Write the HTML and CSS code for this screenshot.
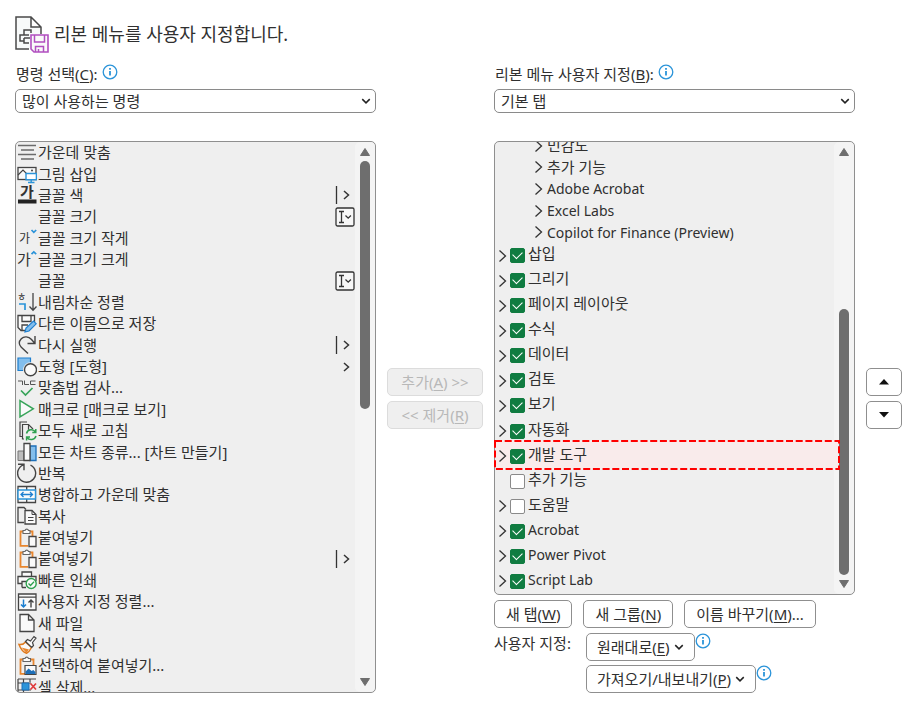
FILE: index.html
```html
<!DOCTYPE html>
<html lang="ko">
<head>
<meta charset="utf-8">
<title>리본 메뉴를 사용자 지정합니다.</title>
<link rel="stylesheet" href="styles.css">
</head>
<body>
<svg class="sprite" aria-hidden="true">
  <symbol id="info" viewBox="0 0 16 16"><circle cx="8" cy="8" r="6.8" fill="none" stroke="#2b94d9" stroke-width="1.3"/><path d="M8 7v4.6M8 4v1.8" stroke="#2b94d9" stroke-width="1.8"/></symbol>
  <symbol id="down" viewBox="0 0 8 8"><path d="M1 2.500l3 3 3-3" fill="none" stroke="#222" stroke-width="1.2"/></symbol>
  <symbol id="exp" viewBox="0 0 10 14"><path d="M1.500 1.500l6 5.500-6 5.500" fill="none" stroke="#333" stroke-width="1.3"/></symbol>
  <symbol id="up-tri" viewBox="0 0 12 10"><path d="M6 1.500L10.500 8.500H1.500z" fill="#6e6e6e" stroke="#6e6e6e" stroke-linejoin="round"/></symbol>
  <symbol id="down-tri" viewBox="0 0 12 10"><path d="M6 8.500L10.500 1.500H1.500z" fill="#6e6e6e" stroke="#6e6e6e" stroke-linejoin="round"/></symbol>
  <symbol id="split" viewBox="0 0 20 20"><path d="M1.500 1v18" stroke="#333" stroke-width="1.3"/><path d="M9 6l4.500 4L9 14" fill="none" stroke="#333" stroke-width="1.500"/></symbol>
  <symbol id="more" viewBox="0 0 20 20"><path d="M9 6l4.500 4L9 14" fill="none" stroke="#333" stroke-width="1.500"/></symbol>
  <symbol id="combo" viewBox="0 0 20 20"><rect x="1" y="1" width="18" height="18" rx="1.500" fill="#f7f7f7" stroke="#333" stroke-width="1.3"/><path d="M4 4.500h5M4 15.500h5M6.500 4.500v11M10.500 8.500l2.700 2.700 2.700-2.700" fill="none" stroke="#333" stroke-width="1.3"/></symbol>

  <symbol id="i-center" viewBox="0 0 20 20"><path d="M1 2.500h18M4 7h13M1 11.500h18M4 16h13" stroke="#6b6b6b" stroke-width="1.4"/></symbol>
  <symbol id="i-pic" viewBox="0 0 20 20"><rect x="1" y="3.500" width="18" height="12" fill="#fafafa" stroke="#444" stroke-width="1.300"/><path d="M1 11l5-5 5 5" fill="none" stroke="#444" stroke-width="1.200"/><circle cx="15" cy="6.500" r="1" fill="#444"/><path d="M9 9.500h10.400v6.300H9z" fill="#fff" stroke="#2b94d9" stroke-width="1.400"/><path d="M14.200 16v2M11 18.500h6.500" stroke="#2b94d9" stroke-width="1.400"/></symbol>
  <symbol id="i-color" viewBox="0 0 20 20"><text x="3" y="12" font-size="15" font-weight="700" class="glyph">가</text><path d="M1 14.500h18.500v4H1z" fill="#222"/></symbol>
  <symbol id="i-smaller" viewBox="0 0 20 20"><text x="2" y="14.500" font-size="12" class="glyph">가</text><path d="M14.500 2l2.300 2.300L19.200 2" fill="none" stroke="#2b94d9" stroke-width="1.700"/></symbol>
  <symbol id="i-bigger" viewBox="0 0 20 20"><text x="0" y="14.500" font-size="15" class="glyph">가</text><path d="M14.500 4.200l2.300-2.300 2.400 2.300" fill="none" stroke="#2b94d9" stroke-width="1.700"/></symbol>
  <symbol id="i-sort" viewBox="0 0 20 20"><text x="0" y="9" font-size="10" class="glyph">ㅎ</text><path d="M2 12h6v6" fill="none" stroke="#2b94d9" stroke-width="1.700"/><path d="M16 1v17M12.500 14.500L16 18.200l3.500-3.700" fill="none" stroke="#444" stroke-width="1.300"/></symbol>
  <symbol id="i-saveas" viewBox="0 0 20 20"><path d="M8 16.500H4L1 13.500V1.500h16.500V8" fill="#fafafa" stroke="#444" stroke-width="1.300"/><path d="M5 1.500v6h9v-6M5 16V11h6" fill="none" stroke="#444" stroke-width="1.300"/><path d="M8 18l1-4 7.500-7 2.700 2.800L12 17z" fill="#83beec" stroke="#1d7fd0" stroke-width="1.200"/></symbol>
  <symbol id="i-redo" viewBox="0 0 20 20"><path d="M18 1v7.500h-7.500M18 8.500L14.500 4.500C11.500 1.300 7 1 4.300 3.700 1.500 6.500 1.700 9.700 4.300 12.200L11 18.500" fill="none" stroke="#444" stroke-width="1.400"/></symbol>
  <symbol id="i-shapes" viewBox="0 0 20 20"><path d="M1 1h12.500v12.500H1z" fill="#83beec" stroke="#1d7fd0" stroke-width="1.200"/><circle cx="13.500" cy="12.800" r="7.500" fill="#efefef"/><circle cx="13.500" cy="12.800" r="6" fill="#fafafa" stroke="#444" stroke-width="1.400"/></symbol>
  <symbol id="i-spell" viewBox="0 0 20 20"><path d="M1 3h4.500v4M7.500 2.500V6.500H12M18.500 3h-5v3.500h5" fill="none" stroke="#555" stroke-width="1"/><path d="M4 12.500l4.500 4.500 7-7" fill="none" stroke="#38a45a" stroke-width="1.700"/></symbol>
  <symbol id="i-macro" viewBox="0 0 20 20"><path d="M3 1.700L16.300 9.800 3 18z" fill="#fafafa" stroke="#38a45a" stroke-width="1.500"/></symbol>
  <symbol id="i-refresh" viewBox="0 0 20 20"><path d="M5 15.500H3V1h7M7 18H5.500V3.500h6L16 8" fill="none" stroke="#444" stroke-width="1.200"/><path d="M11.500 3.500v5h4.500" fill="none" stroke="#444" stroke-width="1.200"/><circle cx="14.200" cy="13.700" r="5.800" fill="#efefef"/><path d="M9.500 12.500a5 5 0 0 1 9-1.500M18.800 8v3.500h-3.500M19 15a5 5 0 0 1-9 1.300M9.600 19.500v-3.500H13" fill="none" stroke="#2fa04f" stroke-width="1.500"/></symbol>
  <symbol id="i-chart" viewBox="0 0 20 20"><path d="M1 9h6v9.500H1z" fill="#bdbdbd" stroke="#777"/><path d="M13 4h6v14.500h-6z" fill="#83beec" stroke="#1d6fb8" stroke-width="1.300"/><path d="M7 1.500h6v17H7z" fill="#fafafa" stroke="#444" stroke-width="1.300"/></symbol>
  <symbol id="i-repeat" viewBox="0 0 20 20"><path d="M6.500 1.800a9 9 0 1 0 7 .3M1 1.200h6v6" fill="none" stroke="#444" stroke-width="1.400"/></symbol>
  <symbol id="i-merge" viewBox="0 0 20 20"><path d="M1 1.500h17.500v16H1zM9.700 1.500v16" fill="#fafafa" stroke="#444" stroke-width="1.300"/><path d="M1 5h17.500v9H1z" fill="#fafafa" stroke="#2b94d9" stroke-width="1.400"/><path d="M4 9.500h11.500M6.500 7L4 9.500 6.500 12M13 7l2.500 2.500L13 12" fill="none" stroke="#1d7fd0" stroke-width="1.300"/></symbol>
  <symbol id="i-copy" viewBox="0 0 20 20"><path d="M7 16.500H1V1.500h6l2 2" fill="none" stroke="#444" stroke-width="1.300"/><path d="M8 4.500h7l4 4V18H8z" fill="#fafafa" stroke="#444" stroke-width="1.300"/><path d="M15 4.500v4h4M11 11.500h5.500M11 14.500h5.500" fill="none" stroke="#444"/></symbol>
  <symbol id="i-paste" viewBox="0 0 20 20"><path d="M11 17.800H3.500V3.500h12V8" fill="none" stroke="#e8862e" stroke-width="1.800"/><path d="M6 5.500v-3h2a1.800 1.800 0 0 1 3.500 0H13v3z" fill="#fafafa" stroke="#666" stroke-width="1.100"/><path d="M12 8.500h7v10h-7z" fill="#fafafa" stroke="#444" stroke-width="1.300"/></symbol>
  <symbol id="i-print" viewBox="0 0 20 20"><path d="M5 6.500V2h9.500v4.500M5 13.500H1V6.500h18V11" fill="#fafafa" stroke="#444" stroke-width="1.300"/><path d="M5 17.500v-6h6M5 17.500h4" fill="none" stroke="#444" stroke-width="1.300"/><circle cx="14.200" cy="13.500" r="5" fill="#fafafa" stroke="#2fa04f" stroke-width="1.400"/><path d="M11.500 13.500l2 2 3.500-3.700" fill="none" stroke="#2fa04f" stroke-width="1.300"/></symbol>
  <symbol id="i-csort" viewBox="0 0 20 20"><path d="M1.500 2h17.500v16H1.500zM1.500 5.200h17.500" fill="#fafafa" stroke="#444" stroke-width="1.300"/><path d="M6.500 7.500v7.500M4 12.500L6.500 15 9 12.500" fill="none" stroke="#1d7fd0" stroke-width="1.500"/><path d="M14 15.500V8M11.500 10.500L14 8l2.500 2.500" fill="none" stroke="#444" stroke-width="1.400"/></symbol>
  <symbol id="i-new" viewBox="0 0 20 20"><path d="M3 1.500h8.500L17 7v11.500H3zM11.500 1.500V7H17" fill="#fafafa" stroke="#444" stroke-width="1.300"/></symbol>
  <symbol id="i-format" viewBox="0 0 20 20"><path d="M2 9.500c3 .5 5-.5 6.500-2.500l6 5.500c-1.500 3-3.500 5-5 5.800C6 17 3.500 13.500 2 9.500z" fill="#fafafa" stroke="#e07b1f" stroke-width="1.500"/><path d="M4.500 12.500l7.500 2-2.500 3.500z" fill="#e8862e"/><path d="M8.500 6.500l2-2 3 1.500 3.500-4.500 2 1.500-3.500 4.500 1 3-1.800 2z" fill="#fafafa" stroke="#444" stroke-width="1.200"/></symbol>
  <symbol id="i-pspecial" viewBox="0 0 20 20"><path d="M8 17.800H3.500V3.500h13V9" fill="none" stroke="#e8862e" stroke-width="1.800"/><path d="M6 5.500v-3h2a1.800 1.800 0 0 1 3.500 0H13.500v3z" fill="#fafafa" stroke="#666" stroke-width="1.100"/><path d="M8 9.500h11v9H8z" fill="#fafafa" stroke="#444" stroke-width="1.200"/><path d="M8.600 18v-2.500l3-3 3 2.500 1.700-1 2.100 2V18z" fill="#1d6fb8"/></symbol>
  <symbol id="i-del" viewBox="0 0 20 20"><path d="M1 2h18M1 6h13M1 13h13M1 2v14h12M6.500 2v14M13 2v3" fill="none" stroke="#444" stroke-width="1.200"/><path d="M5 6h7v7H5z" fill="#2b94d9" stroke="#1d6fb8"/><path d="M13.500 6.500l5.500 6M19 6.500l-5.500 6" stroke="#e03b3b" stroke-width="1.700"/></symbol>
</svg>

<header class="title">
  <svg width="34" height="37" viewBox="0 0 34 37" aria-hidden="true">
    <path d="M14 33H1V1h15l10 10v7M16 1v10h10" fill="#f8fafa" stroke="#4a4a4a" stroke-width="1.500"/>
    <path d="M16 17v-3H9v5M14 27H9v-5M14 19H5v6h4M9 22h6" fill="none" stroke="#4a4a4a" stroke-width="1.500"/>
    <path d="M16 19h17v17H19l-3-3z" fill="#fafafa" stroke="#b14fc0" stroke-width="1.600"/>
    <path d="M19.500 19v7h10v-7M20.500 36v-5.500h8V36M23.500 36v-3" fill="none" stroke="#b14fc0" stroke-width="1.500"/>
  </svg>
  <h1>리본 메뉴를 사용자 지정합니다.</h1>
</header>

<main class="columns">
  <section class="column">
    <div class="field-label"><label for="commands">명령 선택(<u>C</u>):</label><svg class="info"><use href="#info"/></svg></div>
    <div class="picker"><select id="commands"><option>많이 사용하는 명령</option></select><svg><use href="#down"/></svg></div>
    <div class="panel command-panel">
      <ul class="commands">
        <li><svg><use href="#i-center"/></svg><span>가운데 맞춤</span></li>
        <li><svg><use href="#i-pic"/></svg><span>그림 삽입</span></li>
        <li><svg><use href="#i-color"/></svg><span>글꼴 색</span><svg><use href="#split"/></svg></li>
        <li><svg></svg><span>글꼴 크기</span><svg><use href="#combo"/></svg></li>
        <li><svg><use href="#i-smaller"/></svg><span>글꼴 크기 작게</span></li>
        <li><svg><use href="#i-bigger"/></svg><span>글꼴 크기 크게</span></li>
        <li><svg></svg><span>글꼴</span><svg><use href="#combo"/></svg></li>
        <li><svg><use href="#i-sort"/></svg><span>내림차순 정렬</span></li>
        <li><svg><use href="#i-saveas"/></svg><span>다른 이름으로 저장</span></li>
        <li><svg><use href="#i-redo"/></svg><span>다시 실행</span><svg><use href="#split"/></svg></li>
        <li><svg><use href="#i-shapes"/></svg><span>도형 [도형]</span><svg><use href="#more"/></svg></li>
        <li><svg><use href="#i-spell"/></svg><span>맞춤법 검사...</span></li>
        <li><svg><use href="#i-macro"/></svg><span>매크로 [매크로 보기]</span></li>
        <li><svg><use href="#i-refresh"/></svg><span>모두 새로 고침</span></li>
        <li><svg><use href="#i-chart"/></svg><span>모든 차트 종류... [차트 만들기]</span></li>
        <li><svg><use href="#i-repeat"/></svg><span>반복</span></li>
        <li><svg><use href="#i-merge"/></svg><span>병합하고 가운데 맞춤</span></li>
        <li><svg><use href="#i-copy"/></svg><span>복사</span></li>
        <li><svg><use href="#i-paste"/></svg><span>붙여넣기</span></li>
        <li><svg><use href="#i-paste"/></svg><span>붙여넣기</span><svg><use href="#split"/></svg></li>
        <li><svg><use href="#i-print"/></svg><span>빠른 인쇄</span></li>
        <li><svg><use href="#i-csort"/></svg><span>사용자 지정 정렬...</span></li>
        <li><svg><use href="#i-new"/></svg><span>새 파일</span></li>
        <li><svg><use href="#i-format"/></svg><span>서식 복사</span></li>
        <li><svg><use href="#i-pspecial"/></svg><span>선택하여 붙여넣기...</span></li>
        <li><svg><use href="#i-del"/></svg><span>셀 삭제...</span></li>
      </ul>
      <div class="scrollbar command-scroll"><svg><use href="#up-tri"/></svg><i></i><svg><use href="#down-tri"/></svg></div>
    </div>
  </section>

  <div class="transfer">
    <button class="btn" disabled>추가(<u>A</u>) &gt;&gt;</button>
    <button class="btn" disabled>&lt;&lt; 제거(<u>R</u>)</button>
  </div>

  <section class="column">
    <div class="field-label"><label for="ribbon">리본 메뉴 사용자 지정(<u>B</u>):</label><svg class="info"><use href="#info"/></svg></div>
    <div class="picker"><select id="ribbon"><option>기본 탭</option></select><svg><use href="#down"/></svg></div>
    <div class="panel">
      <div class="tree">
        <div class="groups-clip">
          <ul class="groups">
            <li><button class="expander"><svg><use href="#exp"/></svg></button>민감도</li>
            <li><button class="expander"><svg><use href="#exp"/></svg></button>추가 기능</li>
            <li lang="en"><button class="expander"><svg><use href="#exp"/></svg></button>Adobe Acrobat</li>
            <li lang="en"><button class="expander"><svg><use href="#exp"/></svg></button>Excel Labs</li>
            <li lang="en"><button class="expander"><svg><use href="#exp"/></svg></button>Copilot for Finance (Preview)</li>
          </ul>
        </div>
        <ul class="tabs">
          <li><button class="expander"><svg><use href="#exp"/></svg></button><label><input type="checkbox" checked><span>삽입</span></label></li>
          <li><button class="expander"><svg><use href="#exp"/></svg></button><label><input type="checkbox" checked><span>그리기</span></label></li>
          <li><button class="expander"><svg><use href="#exp"/></svg></button><label><input type="checkbox" checked><span>페이지 레이아웃</span></label></li>
          <li><button class="expander"><svg><use href="#exp"/></svg></button><label><input type="checkbox" checked><span>수식</span></label></li>
          <li><button class="expander"><svg><use href="#exp"/></svg></button><label><input type="checkbox" checked><span>데이터</span></label></li>
          <li><button class="expander"><svg><use href="#exp"/></svg></button><label><input type="checkbox" checked><span>검토</span></label></li>
          <li><button class="expander"><svg><use href="#exp"/></svg></button><label><input type="checkbox" checked><span>보기</span></label></li>
          <li><button class="expander"><svg><use href="#exp"/></svg></button><label><input type="checkbox" checked><span>자동화</span></label></li>
          <li class="marked"><button class="expander"><svg><use href="#exp"/></svg></button><label><input type="checkbox" checked><span>개발 도구</span></label><svg class="marker"><rect width="100%" height="100%"/></svg></li>
          <li class="leaf"><label><input type="checkbox"><span>추가 기능</span></label></li>
          <li><button class="expander"><svg><use href="#exp"/></svg></button><label><input type="checkbox"><span>도움말</span></label></li>
          <li lang="en"><button class="expander"><svg><use href="#exp"/></svg></button><label><input type="checkbox" checked><span>Acrobat</span></label></li>
          <li lang="en"><button class="expander"><svg><use href="#exp"/></svg></button><label><input type="checkbox" checked><span>Power Pivot</span></label></li>
          <li lang="en"><button class="expander"><svg><use href="#exp"/></svg></button><label><input type="checkbox" checked><span>Script Lab</span></label></li>
        </ul>
      </div>
      <div class="scrollbar tree-scroll"><svg><use href="#up-tri"/></svg><i></i><svg><use href="#down-tri"/></svg></div>
    </div>
    <div class="tab-actions">
      <button class="btn">새 탭(<u>W</u>)</button>
      <button class="btn">새 그룹(<u>N</u>)</button>
      <button class="btn">이름 바꾸기(<u>M</u>)...</button>
    </div>
    <div class="custom">
      <span class="custom-label">사용자 지정:</span>
      <div class="custom-row"><button class="btn">원래대로(<u>E</u>)<svg><use href="#down"/></svg></button><svg class="info"><use href="#info"/></svg></div>
      <div class="custom-row"><button class="btn">가져오기/내보내기(<u>P</u>)<svg><use href="#down"/></svg></button><svg class="info"><use href="#info"/></svg></div>
    </div>
  </section>

  <div class="reorder">
    <button class="btn"><svg viewBox="0 0 10 6"><path d="M5 0l5 5.500H0z"/></svg></button>
    <button class="btn"><svg viewBox="0 0 10 6"><path d="M5 5.500L10 0H0z"/></svg></button>
  </div>
</main>
</body>
</html>
```
FILE: styles.css
```css
* { box-sizing: border-box; }

body {
  margin: 0;
  padding: 16px 15px 14px;
  background: #fff;
  color: #303030;
  font: 15px/21px "Noto Sans", "Noto Sans CJK KR", sans-serif;
}

ul { margin: 0; padding: 0; list-style: none; }
u { text-underline-offset: 2px; }
button, select { font: inherit; color: inherit; }
.sprite { display: none; }
.glyph { font-family: "Noto Sans CJK KR", sans-serif; fill: #333; }

.title { display: flex; align-items: center; gap: 5px; height: 37px; }
.title h1 { margin: 0; font-size: 18px; font-weight: 400; }

.columns {
  display: grid;
  grid-template-columns: 1fr 96px 1fr 36px;
  column-gap: 11px;
  margin-top: 11px;
}
.column { min-width: 0; }

.field-label { display: flex; align-items: flex-start; gap: 4px; height: 25px; padding-left: 1px; }
.info { flex: none; width: 16px; height: 16px; }

.picker { display: grid; align-items: center; }
.picker > * { grid-area: 1 / 1; }
.picker svg { justify-self: end; width: 10px; height: 10px; margin-right: 5px; pointer-events: none; }
.picker select {
  appearance: none;
  width: 100%;
  height: 24px;
  padding: 0 6px;
  border: 1px solid #8a8a8a;
  border-radius: 5px;
  background: #fff;
}

.panel {
  display: grid;
  grid-template-columns: 1fr 20px;
  margin-top: 28px;
  border: 1px solid #8f8f8f;
  border-radius: 5px;
  background: #efefef;
}

.command-panel { height: 552px; overflow: hidden; }
.commands { display: grid; grid-auto-rows: 1fr; height: 556px; padding-left: 1px; }
.commands li { display: flex; align-items: center; gap: 1px; white-space: nowrap; }
.commands span { flex: 1; }
.commands svg { flex: none; width: 20px; height: 20px; }

.scrollbar {
  display: flex;
  flex-direction: column;
  align-items: center;
  gap: 4px;
  padding: 5px 0;
  border-radius: 5px;
  background: #f4f4f4;
}
.command-scroll { height: 550px; }
.scrollbar svg { flex: none; width: 12px; height: 10px; }
.scrollbar i { width: 10px; border-radius: 5px; background: #6e6e6e; }
.scrollbar svg:last-child { margin-top: auto; }
.command-scroll i { height: 248px; }
.tree-scroll i { height: 266px; margin-top: auto; }
.tree-scroll svg:last-child { margin-top: 0; }

.groups-clip { height: 101px; overflow: hidden; }
.groups { display: grid; grid-auto-rows: 1fr; height: 108px; margin-top: -7px; padding-left: 39px; }
.groups li { display: flex; align-items: center; gap: 3px; }
.tree [lang="en"] { font-size: 14px; }
.expander { display: flex; flex: none; padding: 0; border: 0; background: none; }
.expander svg { width: 10px; height: 14px; }
.tabs { display: grid; grid-auto-rows: 1fr; height: 351px; padding-left: 3px; }
.tabs li { display: flex; align-items: center; gap: 2px; }
.tabs label { display: flex; align-items: center; gap: 3px; }
.tabs span { padding-bottom: 4px; }
.tabs .leaf { padding-left: 12px; }

input[type="checkbox"] {
  appearance: none;
  display: grid;
  place-items: center;
  width: 15px;
  height: 15px;
  margin: 0;
  border: 1px solid #8a8a8a;
  border-radius: 2px;
  background: #fff;
}
input[type="checkbox"]:checked { border-color: #107c41; background: #107c41; }
input[type="checkbox"]:checked::after {
  content: "";
  width: 8px;
  height: 5px;
  margin-bottom: 3px;
  border: solid #fff;
  border-width: 0 0 1px 1px;
  transform: rotate(-45deg);
}

.marked { position: relative; isolation: isolate; }
.marker { position: absolute; z-index: -1; top: -3px; left: -3px; width: calc(100% + 8px); height: 28px; overflow: visible; }
.marker rect { fill: #f9ebeb; stroke: #f00; stroke-width: 2; stroke-dasharray: 7 2.7; }

.btn {
  display: inline-flex;
  align-items: center;
  justify-content: center;
  height: 28px;
  padding: 0 10px;
  border: 1px solid #8f8f8f;
  border-radius: 5px;
  background: #fff;
  white-space: pre;
}
.btn svg { width: 10px; height: 10px; margin-left: 4px; }
.btn:disabled { border-color: #dcdcdc; background: #efefef; color: #b8b8b8; }

.transfer, .reorder { display: flex; flex-direction: column; gap: 5px; padding-top: 304px; }
.reorder .btn { padding: 0; }
.reorder .btn svg { height: 6px; margin: 0; fill: #111; }

.tab-actions { display: flex; gap: 11px; margin-top: 5px; }
.tab-actions .btn { padding: 0 11px; }
.custom { display: grid; grid-template-columns: 92px 1fr; row-gap: 4px; margin-top: 5px; }
.custom-row { display: flex; grid-column: 2; }
.custom-label { grid-area: 1 / 1; }
```
